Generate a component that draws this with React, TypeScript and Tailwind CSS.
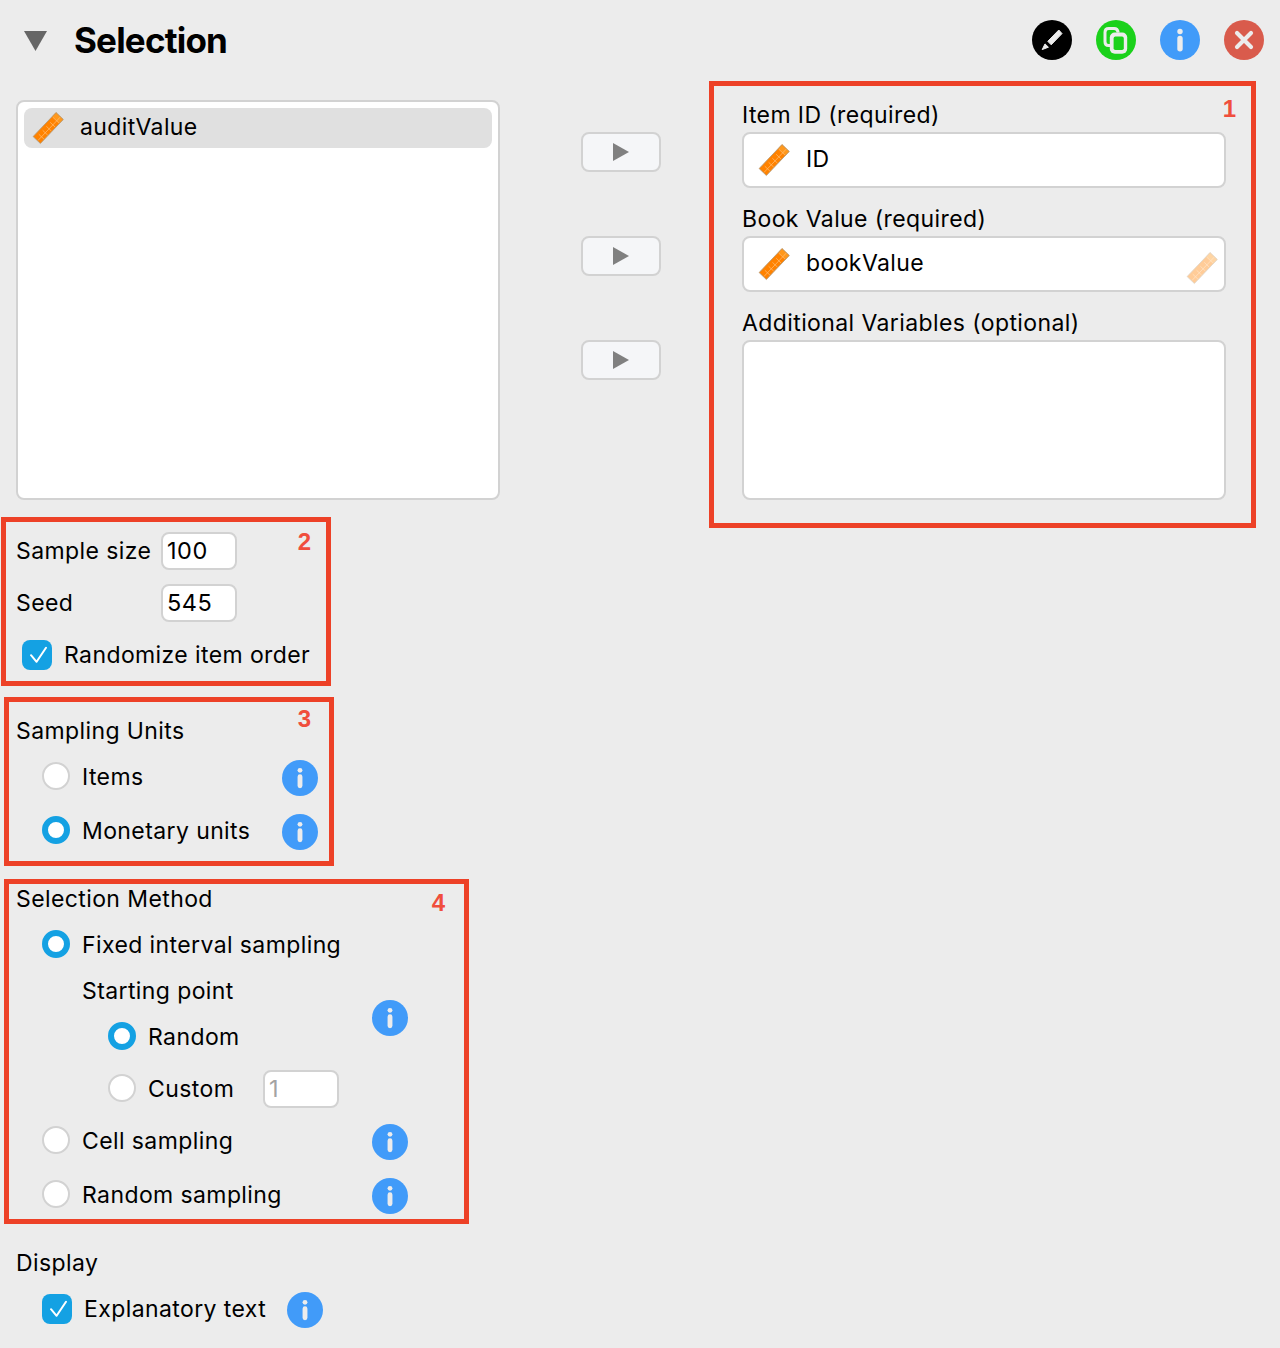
import type { ReactNode } from 'react';

function InfoIcon({ className = 'size-9' }: { className?: string }) {
  return (
    <svg viewBox="0 0 40 40" className={`block shrink-0 ${className}`}>
      <circle cx="20" cy="20" r="20" fill="#419bf9" />
      <circle cx="20" cy="11.5" r="2.7" fill="#ececec" />
      <rect x="17.3" y="15.8" width="5.4" height="15.6" rx="2.7" fill="#ececec" />
    </svg>
  );
}

function BrushIcon() {
  return (
    <svg viewBox="0 0 40 40" className="block size-10">
      <circle cx="20" cy="20" r="20" />
      <g fill="#ececec" stroke="#ececec" strokeWidth="1" strokeLinejoin="round">
        <path d="M26.8 10L30 13.6L19.2 24.8L15.8 21.3Z" />
        <path d="M13 23.9L16.4 27.2L10.2 29.6Z" />
      </g>
    </svg>
  );
}

function CopyIcon() {
  return (
    <svg viewBox="0 0 40 40" className="block size-10">
      <circle cx="20" cy="20" r="20" fill="#1bd11b" />
      <path d="M14.5 25.6H12.6Q9 25.6 9 21.8V12.2Q9 8.5 12.8 8.5H18.2Q21.6 8.5 22.2 12.6" fill="none" stroke="#ececec" strokeWidth="3" />
      <rect x="13.8" y="12.6" width="17.4" height="21.2" rx="5" fill="#ececec" />
      <rect x="17.6" y="16.6" width="10.2" height="13.4" rx="1.8" fill="#1bd11b" />
    </svg>
  );
}

function CloseIcon() {
  return (
    <svg viewBox="0 0 40 40" className="block size-10">
      <circle cx="20" cy="20" r="20" fill="#d95b4c" />
      <path d="M13 13l14 14M27 13L13 27" stroke="#ececec" strokeWidth="4.2" strokeLinecap="round" />
    </svg>
  );
}

function RulerIcon({ className = '' }: { className?: string }) {
  return (
    <svg viewBox="0 0 32 32" className={`block size-8 shrink-0 overflow-visible ${className}`}>
      <g transform="translate(16.2 16) rotate(-46.4)">
        <rect x="-16.6" y="-5" width="33.2" height="10" fill="#ff8200" />
        <rect x="11.2" y="-5" width="5.4" height="10" fill="#ff981c" />
        <path d="M-16.2 1.2H16.2M-11 -2.5V4.6M-5.5 -2.5V4.6M0 -2.5V4.6M5.5 -2.5V4.6M11 -4.6V4.6" stroke="#ffc888" strokeWidth=".7" opacity=".85" />
        <rect x="-16.6" y="-5" width="33.2" height="10" fill="none" stroke="#b39a78" strokeWidth=".8" />
      </g>
    </svg>
  );
}

function Label({ children, className = '' }: { children: ReactNode; className?: string }) {
  return <span className={`block whitespace-nowrap ${className}`}>{children}</span>;
}

function Radio({ checked = false }: { checked?: boolean }) {
  return (
    <span
      className={`mr-3 mb-1 block size-7 shrink-0 rounded-full bg-white ${
        checked ? 'border-[6px] border-[#14a1e3]' : 'border-2 border-[#d2d2d2]'
      }`}
    />
  );
}

function Checkbox({ className = '' }: { className?: string }) {
  return (
    <span className={`mr-3 block size-[30px] shrink-0 rounded-lg bg-[#14a1e3] ${className}`}>
      <svg viewBox="0 0 30 30" className="block size-full">
        <path d="M9 15.2L14.6 21.8L24 7.8" fill="none" stroke="#fff" strokeWidth="2" strokeLinecap="round" strokeLinejoin="round" />
      </svg>
    </span>
  );
}

function NumberBox({ value, muted = false }: { value: string; muted?: boolean }) {
  return (
    <div
      className={`flex h-[38px] w-[76px] shrink-0 items-center rounded-lg border-2 border-[#d2d2d2] bg-white pl-1 text-[23.5px] tracking-[0.5px] ${
        muted ? 'mb-0.5 text-[#a3a3a3]' : ''
      }`}
    >
      {value}
    </div>
  );
}

function AssignButton() {
  return (
    <div className="flex h-10 w-20 items-center justify-center rounded-lg border-2 border-[#d2d2d2] bg-[#f5f6f8]">
      <svg viewBox="0 0 16 18" className="block h-[18px] w-4">
        <path d="M0 0L16 9L0 18Z" fill="#808080" />
      </svg>
    </div>
  );
}

function Marker({ children, className }: { children: ReactNode; className: string }) {
  return (
    <span className={`absolute font-['Liberation_Sans',sans-serif] text-[24px] leading-6 font-bold tracking-normal text-[#f04e3c] ${className}`}>
      {children}
    </span>
  );
}

export default function App() {
  return (
    <main className="h-[1348px] w-[1280px] overflow-hidden bg-[#ececec] font-['Inter',sans-serif] text-[23px] leading-[30px] tracking-[0.4px] text-black">
      <header className="flex h-[81px] items-center pr-4 pb-px pl-6">
        <svg viewBox="0 0 23 20" className="mt-0.5 block h-5 w-[23px]">
          <path d="M0 0H23L11.5 20Z" fill="#666" />
        </svg>
        <h1 className="ml-[27px] text-[35px] leading-10 font-bold tracking-[-0.8px]">Selection</h1>
        <div className="ml-auto flex gap-6">
          <BrushIcon />
          <CopyIcon />
          <InfoIcon className="size-10" />
          <CloseIcon />
        </div>
      </header>

      <div className="flex h-[436px] pl-4">
        <div className="mt-[19px] h-[400px] w-[484px] rounded-lg border-2 border-[#d2d2d2] bg-white p-1.5">
          <div className="flex h-10 items-center rounded-lg bg-[#e0e0e0] pl-2">
            <RulerIcon />
            <Label className="mb-0.5 ml-4">auditValue</Label>
          </div>
        </div>
        <div className="mt-[51px] ml-[81px] flex w-20 flex-col gap-16">
          <AssignButton />
          <AssignButton />
          <AssignButton />
        </div>
        <section className="relative ml-12 h-[447px] w-[547px] border-[5px] border-[#ed4127] pt-[14px] pl-7">
          <Marker className="top-[11px] right-[15px]">1</Marker>
          <Label>Item ID (required)</Label>
          <div className="mt-0.5 flex h-14 w-[484px] items-center rounded-lg border-2 border-[#d2d2d2] bg-white pl-[14px]">
            <RulerIcon />
            <Label className="mb-0.5 ml-4">ID</Label>
          </div>
          <Label className="mt-4">Book Value (required)</Label>
          <div className="mt-0.5 flex h-14 w-[484px] items-center rounded-lg border-2 border-[#d2d2d2] bg-white pr-1.5 pl-[14px]">
            <RulerIcon />
            <Label className="mb-0.5 ml-4">bookValue</Label>
            <RulerIcon className="mt-2 ml-auto opacity-40" />
          </div>
          <Label className="mt-4">Additional Variables (optional)</Label>
          <div className="mt-0.5 h-40 w-[484px] rounded-lg border-2 border-[#d2d2d2] bg-white" />
        </section>
      </div>

      <section className="relative ml-px h-[169px] w-[330px] border-[5px] border-[#ed4127] pt-2.5 pl-2.5">
        <Marker className="top-[8px] right-[15px]">2</Marker>
        <div className="flex items-center">
          <Label className="w-[145px]">Sample size</Label>
          <NumberBox value="100" />
        </div>
        <div className="mt-[14px] flex items-center">
          <Label className="w-[145px]">Seed</Label>
          <NumberBox value="545" />
        </div>
        <div className="mt-[18px] flex items-center pl-1.5">
          <Checkbox />
          <Label>Randomize item order</Label>
        </div>
      </section>

      <section className="relative mt-[11px] ml-1 h-[169px] w-[330px] border-[5px] border-[#ed4127] pt-[14px] pl-[7px]">
        <Marker className="top-[5px] right-[18px]">3</Marker>
        <Label>Sampling Units</Label>
        <div className="mt-[14px] flex h-9 items-center pr-[11px] pl-[26px]">
          <Radio />
          <Label className="mb-0.5">Items</Label>
          <InfoIcon className="ml-auto size-9" />
        </div>
        <div className="mt-[18px] flex h-9 items-center pr-[11px] pl-[26px]">
          <Radio checked />
          <Label className="mb-0.5">Monetary units</Label>
          <InfoIcon className="ml-auto size-9" />
        </div>
      </section>

      <section className="relative mt-[13px] ml-1 h-[345px] w-[465px] border-[5px] border-[#ed4127] pr-14 pl-[7px]">
        <Marker className="top-[7px] right-[19px]">4</Marker>
        <Label>Selection Method</Label>
        <div className="mt-[14px] flex items-center justify-between pl-[26px]">
          <div>
            <div className="flex h-9 items-center">
              <Radio checked />
              <Label className="mb-0.5">Fixed interval sampling</Label>
            </div>
            <div className="mt-2.5 flex h-9 items-center pl-10">
              <Label className="mb-0.5">Starting point</Label>
            </div>
            <div className="mt-2.5 flex h-9 items-center pl-[66px]">
              <Radio checked />
              <Label className="mb-0.5">Random</Label>
            </div>
            <div className="mt-4 flex h-9 items-center pl-[66px]">
              <Radio />
              <Label className="mb-0.5 w-[115px]">Custom</Label>
              <NumberBox value="1" muted />
            </div>
          </div>
          <InfoIcon />
        </div>
        <div className="mt-4 flex h-9 items-center pl-[26px]">
          <Radio />
          <Label className="mb-0.5">Cell sampling</Label>
          <InfoIcon className="ml-auto size-9" />
        </div>
        <div className="mt-[18px] flex h-9 items-center pl-[26px]">
          <Radio />
          <Label className="mb-0.5">Random sampling</Label>
          <InfoIcon className="ml-auto size-9" />
        </div>
      </section>

      <section className="mt-6 pl-4">
        <Label>Display</Label>
        <div className="mt-[14px] flex h-9 items-center pl-[26px]">
          <Checkbox className="mb-0.5" />
          <Label className="mb-0.5 w-[203px]">Explanatory text</Label>
          <InfoIcon />
        </div>
      </section>
    </main>
  );
}
